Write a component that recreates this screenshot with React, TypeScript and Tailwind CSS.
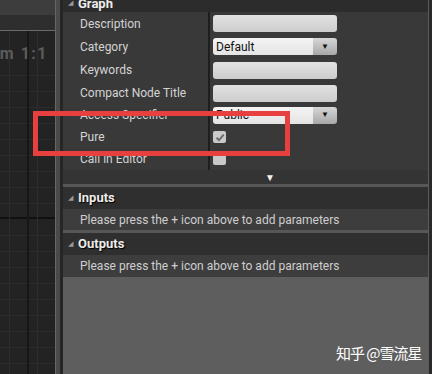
import type { ReactNode } from 'react';

const rows: { label: string; h: string; kind: 'text' | 'combo' | 'check' | 'empty'; value?: string }[] = [
  { label: 'Description', h: 'h-[23px]', kind: 'text' },
  { label: 'Category', h: 'h-[23px]', kind: 'combo', value: 'Default' },
  { label: 'Keywords', h: 'h-[24px]', kind: 'text' },
  { label: 'Compact Node Title', h: 'h-[22px]', kind: 'text' },
  { label: 'Access Specifier', h: 'h-[22px]', kind: 'combo', value: 'Public' },
  { label: 'Pure', h: 'h-[22px]', kind: 'check' },
  { label: 'Call in Editor', h: 'h-[22px]', kind: 'empty' },
];

function Value({ kind, value }: { kind: string; value?: string }) {
  if (kind === 'text') {
    return <div className="h-[17px] w-[124px] rounded-[3px] bg-[linear-gradient(#e2e2e2,#cdcdcd)]" />;
  }
  if (kind === 'combo') {
    return (
      <div className="flex h-[17px] w-[124px] overflow-hidden rounded-[3px]">
        <div className="flex flex-1 items-center bg-[linear-gradient(#f4f4f4,#e4e4e4)] pl-[3px] text-[12px] text-[#111]">
          {value}
        </div>
        <div className="flex w-[24px] items-center justify-center bg-[linear-gradient(#d6d6d6,#a8a8a8)] text-[8px] text-[#111]">
          ▼
        </div>
      </div>
    );
  }
  return (
    <div className="flex h-[12px] w-[13px] items-center justify-center rounded-[2px] bg-[#c9c9c9]">
      {kind === 'check' && (
        <svg width="10" height="9" viewBox="0 0 10 9">
          <path d="M1.5 4.8 L4 7.2 L8.7 1.6" fill="none" stroke="#6b6b6b" strokeWidth="1.9" />
        </svg>
      )}
    </div>
  );
}

function Section({ title, children }: { title: string; children: ReactNode }) {
  return (
    <div>
      <div className="flex h-[22px] items-center bg-[#2f2f2f] pl-[5px]">
        <span className="text-[7px] text-[#9a9a9a]">◢</span>
        <span className="ml-[5px] text-[13px] font-bold text-[#ececec] [text-shadow:1px_1px_1px_#000]">{title}</span>
      </div>
      {children}
    </div>
  );
}

export default function App() {
  return (
    <div className="relative flex h-[374px] w-[432px] overflow-hidden bg-[#2a2a2a] font-['Roboto','Liberation_Sans',sans-serif]">
      {/* graph editor strip */}
      <div className="flex h-full w-[63px] shrink-0">
        <div className="flex w-[55px] flex-col">
          <div className="h-[15px] bg-[#3d3d3d]" />
          <div className="h-[15px] bg-[#2e2e2e]" />
          <div className="relative flex-1 border-t border-[#6a6a6a] bg-[#232323] bg-[linear-gradient(90deg,transparent_9px,#2d2d2d_9px,#2d2d2d_10px,transparent_10px,transparent_27px,#161616_27px,#161616_29px,transparent_29px,transparent_37px,#2d2d2d_37px,#2d2d2d_38px,transparent_38px),linear-gradient(transparent_44px,#2b2b2b_44px,#2b2b2b_45px,transparent_45px,transparent_60px,#2b2b2b_60px,#2b2b2b_61px,transparent_61px,transparent_76px,#2b2b2b_76px,#2b2b2b_77px,transparent_77px,transparent_92px,#2b2b2b_92px,#2b2b2b_93px,transparent_93px,transparent_108px,#2b2b2b_108px,#2b2b2b_109px,transparent_109px,transparent_124px,#2b2b2b_124px,#2b2b2b_125px,transparent_125px,transparent_140px,#2b2b2b_140px,#2b2b2b_141px,transparent_141px,transparent_156px,#2b2b2b_156px,#2b2b2b_157px,transparent_157px,transparent_172px,#2b2b2b_172px,#2b2b2b_173px,transparent_173px,transparent_186px,#111_186px,#111_188px,transparent_188px,transparent_204px,#2b2b2b_204px,#2b2b2b_205px,transparent_205px,transparent_220px,#2b2b2b_220px,#2b2b2b_221px,transparent_221px,transparent_236px,#2b2b2b_236px,#2b2b2b_237px,transparent_237px,transparent_252px,#2b2b2b_252px,#2b2b2b_253px,transparent_253px,transparent_268px,#2b2b2b_268px,#2b2b2b_269px,transparent_269px,transparent_284px,#2b2b2b_284px,#2b2b2b_285px,transparent_285px,transparent_300px,#2b2b2b_300px,#2b2b2b_301px,transparent_301px,transparent_316px,#2b2b2b_316px,#2b2b2b_317px,transparent_317px,transparent_332px,#2b2b2b_332px,#2b2b2b_333px,transparent_333px)]">
            <div className="flex justify-end pr-[7px] pt-[11px] text-[16px] font-bold tracking-[1.5px] whitespace-nowrap text-[#5c5c5c]">
              m 1:1
            </div>
          </div>
        </div>
        <div className="w-px bg-[#666]" />
        <div className="w-[4px] bg-[#4a4a4a]" />
        <div className="w-[3px] bg-[#262626]" />
      </div>

      {/* details panel */}
      <div className="flex w-[365px] flex-col bg-[#5e5e5e]">
        <div className="relative h-[12px] bg-[#2c2c2c]">
          <div className="absolute bottom-[1px] left-[5px] flex items-center">
            <span className="text-[7px] text-[#9a9a9a]">◢</span>
            <span className="ml-[5px] text-[13px] leading-[15px] font-bold text-[#ececec]">Graph</span>
          </div>
        </div>

        <div className="bg-[#393939]">
          {rows.map((r) => (
            <div key={r.label} className={`flex ${r.h}`}>
              <div className="flex w-[145px] items-center pl-[17px] text-[12px] text-[#d4d4d4]">
                {r.label}
              </div>
              <div className="w-[2px] bg-[#1e1e1e]" />
              <div className="flex flex-1 items-center pl-[3px]">
                <Value kind={r.kind} value={r.value} />
              </div>
            </div>
          ))}
        </div>

        <div className="flex h-[14px] items-center bg-[#343434] pl-[202px] text-[10px] text-[#f0f0f0]">
          ▼
        </div>
        <div className="h-[3px] bg-[#575757]" />

        <Section title="Inputs">
          <div className="flex h-[21px] items-center bg-[#3d3d3d] pl-[17px] text-[12px] text-[#cfcfcf]">
            Please press the + icon above to add parameters
          </div>
        </Section>
        <div className="h-[3px] bg-[#575757]" />
        <Section title="Outputs">
          <div className="flex h-[22px] items-center bg-[#3d3d3d] pl-[17px] text-[12px] text-[#cfcfcf]">
            Please press the + icon above to add parameters
          </div>
        </Section>
        <div className="flex-1 bg-[#5e5e5e]" />
      </div>
      <div className="flex w-[4px]">
        <div className="w-px bg-[#5a5a5a]" />
        <div className="flex-1 bg-[#2a2a2a]" />
      </div>

      {/* red highlight box */}
      <div className="absolute top-[111px] left-[33px] h-[45px] w-[257px] border-[5px] border-[#e8403f]" />

      {/* watermark */}
      <div className="absolute top-[342px] left-[336px] text-[15px] tracking-[-1px] whitespace-nowrap text-white font-['Noto_Sans_CJK_SC',sans-serif]">
        知乎 @雪流星
      </div>
    </div>
  );
}
